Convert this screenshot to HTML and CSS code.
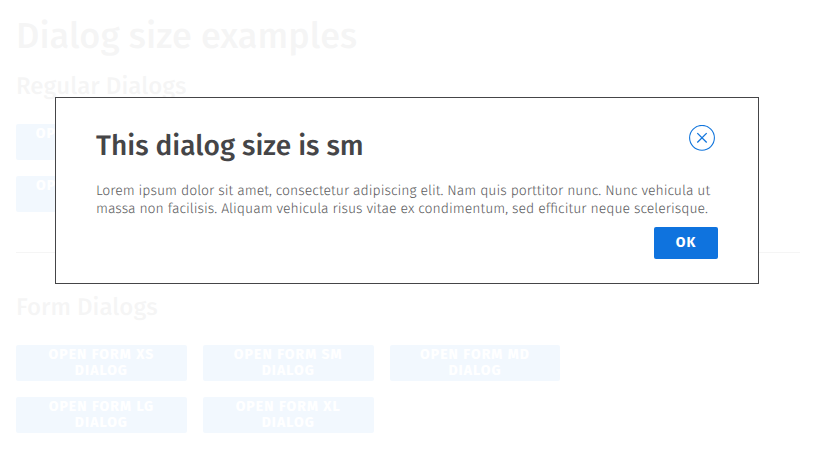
FILE: index.html
```html
<!DOCTYPE html>
<html lang="en">
<head>
<meta charset="utf-8">
<title>Dialog size examples</title>
<link rel="stylesheet" href="styles.css">
</head>
<body>
<main class="page">
  <h1 class="title">Dialog size examples</h1>
  <h2 class="section regular">Regular Dialogs</h2>
  <div class="buttons">
    <button class="btn">OPEN REGULAR XS<br>DIALOG</button>
    <button class="btn">OPEN REGULAR SM<br>DIALOG</button>
    <button class="btn">OPEN REGULAR MD<br>DIALOG</button>
    <button class="btn">OPEN REGULAR LG<br>DIALOG</button>
    <button class="btn">OPEN REGULAR XL<br>DIALOG</button>
  </div>
  <hr class="rule">
  <h2 class="section form">Form Dialogs</h2>
  <div class="buttons">
    <button class="btn">OPEN FORM XS<br>DIALOG</button>
    <button class="btn">OPEN FORM SM<br>DIALOG</button>
    <button class="btn">OPEN FORM MD<br>DIALOG</button>
    <button class="btn">OPEN FORM LG<br>DIALOG</button>
    <button class="btn">OPEN FORM XL<br>DIALOG</button>
  </div>
</main>
<div class="overlay">
  <section class="dialog" role="dialog" aria-modal="true">
    <header class="dialog-head">
      <h3 class="dialog-title">This dialog size is sm</h3>
      <button class="close" aria-label="Close">
        <svg width="26" height="26" viewBox="0 0 26 26" fill="none" stroke="#1175dc">
          <circle cx="13" cy="12.8" r="12.4" stroke-width="1.1"/>
          <path d="M8.3 8.1l9.4 9.4M17.7 8.1l-9.4 9.4" stroke-width="1.3"/>
        </svg>
      </button>
    </header>
    <p class="text">Lorem ipsum dolor sit amet, consectetur adipiscing elit. Nam quis porttitor nunc. Nunc vehicula ut<br>massa non facilisis. Aliquam vehicula risus vitae ex condimentum, sed efficitur neque scelerisque.</p>
    <footer class="dialog-foot"><button class="ok">OK</button></footer>
  </section>
</div>
</body>
</html>
```
FILE: styles.css
```css
* { box-sizing: border-box; }
body {
  margin: 0;
  height: 449px;
  overflow: hidden;
  background: #fff;
  color: #454547;
  font-family: "Fira Sans", "Noto Sans", sans-serif;
  text-rendering: geometricPrecision;
}
button { border: 0; margin: 0; padding: 0; font-family: inherit; }
h1, h2, h3, p { margin: 0; white-space: nowrap; }
.page { padding: 16px 14px 0 16px; }
.title { font-size: 36.1px; line-height: 40px; font-weight: 500; }
.section { font-size: 24.1px; line-height: 32px; font-weight: 500; }
.regular { margin-top: 15px; }
.form { margin-top: 39px; }
.buttons {
  display: grid;
  grid-template-columns: repeat(3, 170.8px);
  gap: 16px;
  margin-top: 21px;
}
.btn {
  height: 36px;
  border-radius: 2px;
  background: #0f73de;
  color: #fff;
  font-size: 14px;
  line-height: 16px;
  font-weight: 700;
  letter-spacing: 1.05px;
  white-space: nowrap;
}
.rule { height: 1px; margin: 40px 0 0; border: 0; background: #454547; }
.overlay { position: fixed; inset: 0; background: rgba(255, 255, 255, 0.95); }
.dialog {
  position: absolute;
  left: 55px;
  top: 97px;
  width: 704px;
  height: 187px;
  padding: 27px 40px 24px;
  border: 1px solid #454547;
  background: #fff;
}
.dialog-head { display: flex; justify-content: space-between; height: 57px; }
.dialog-title { padding-top: 2px; font-size: 28.1px; line-height: 40px; font-weight: 500; }
.close { width: 26px; height: 26px; margin-right: 3px; background: none; }
.close svg { display: block; }
.text { font-size: 14.02px; line-height: 18px; font-weight: 300; color: #5c5c5e; }
.dialog-foot { display: flex; justify-content: flex-end; margin-top: 9px; }
.ok {
  width: 64px;
  height: 32px;
  padding-bottom: 1px;
  border-radius: 2px;
  background: #0f73de;
  color: #fff;
  font-size: 14px;
  font-weight: 700;
  letter-spacing: 1px;
}
```
